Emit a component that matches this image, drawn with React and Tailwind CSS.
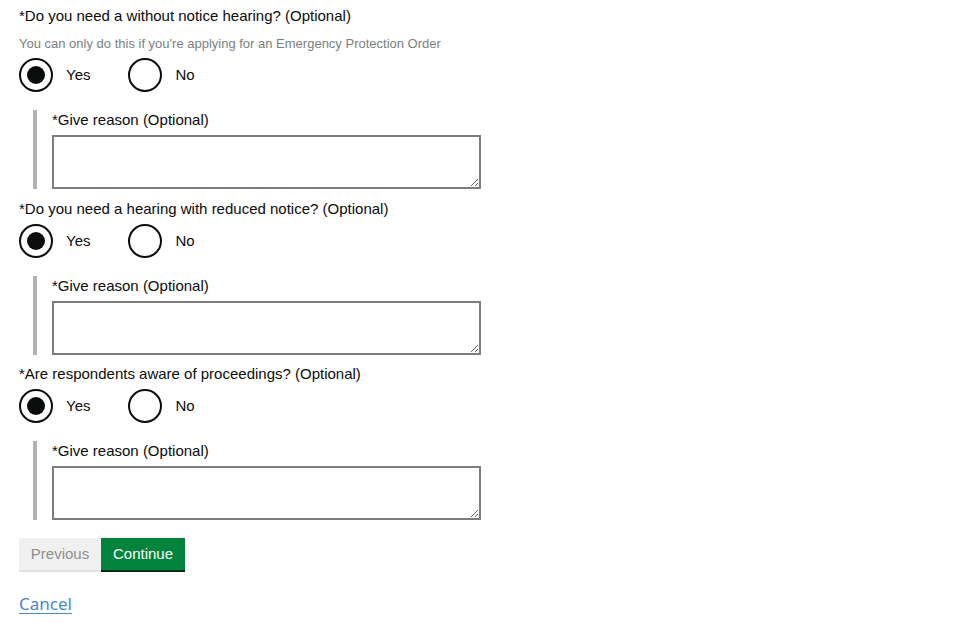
import React from "react";

const questions = [
  {
    label: "*Do you need a without notice hearing? (Optional)",
    hint: "You can only do this if you're applying for an Emergency Protection Order",
    top: "mt-[6px]",
  },
  { label: "*Do you need a hearing with reduced notice? (Optional)", top: "mt-[10px]" },
  { label: "*Are respondents aware of proceedings? (Optional)", top: "mt-[9px]" },
];

function Radio({ checked, label }) {
  return (
    <label className="flex items-center">
      <span className="w-[34px] h-[34px] rounded-full border-2 border-[#0b0c0c] flex items-center justify-center bg-white">
        {checked && <span className="w-[18px] h-[18px] rounded-full bg-[#0b0c0c]" />}
      </span>
      <span className="ml-[13px] text-[15px] leading-5 text-[#0b0c0c]">{label}</span>
    </label>
  );
}

function Question({ q }) {
  return (
    <div className={q.top}>
      <div className="text-[15px] leading-5 text-[#0b0c0c]">{q.label}</div>
      {q.hint && (
        <div className="mt-[10px] text-[13px] leading-4 text-[#7b7f82]">{q.hint}</div>
      )}
      <div className={q.hint ? "mt-[6px] flex gap-[38px]" : "mt-[5px] flex gap-[38px]"}>
        <Radio checked label="Yes" />
        <Radio label="No" />
      </div>
      {/* conditional reveal */}
      <div className="mt-[18px] ml-[14px] border-l-4 border-[#b1b4b6] pl-[15px] h-[79px]">
        <div className="text-[15px] leading-5 text-[#0b0c0c]">*Give reason (Optional)</div>
        <textarea className="mt-[5px] block w-[429px] h-[54px] border-2 border-[#7d7d7d] bg-white resize" />
      </div>
    </div>
  );
}

export default function App() {
  return (
    <div className="w-[960px] h-[640px] bg-white pl-[19px] font-['Liberation_Sans',Arial,sans-serif]">
      {questions.map((q, i) => (
        <Question key={i} q={q} />
      ))}
      <div className="mt-[18px] flex">
        <button className="w-[82px] h-[32px] bg-[#f0f0f0] text-[#8f8f8f] text-[15px] shadow-[0_2px_0_#e2e2e2]">
          Previous
        </button>
        <button className="w-[84px] h-[32px] bg-[#00843d] text-white text-[15px] shadow-[0_2px_0_#002d18]">
          Continue
        </button>
      </div>
      <div className="mt-[23px]">
        <a href="#" className="text-[17px] leading-5 text-[#4a88c7] underline underline-offset-[3px] font-['Noto_Sans',sans-serif]">
          Cancel
        </a>
      </div>
    </div>
  );
}
